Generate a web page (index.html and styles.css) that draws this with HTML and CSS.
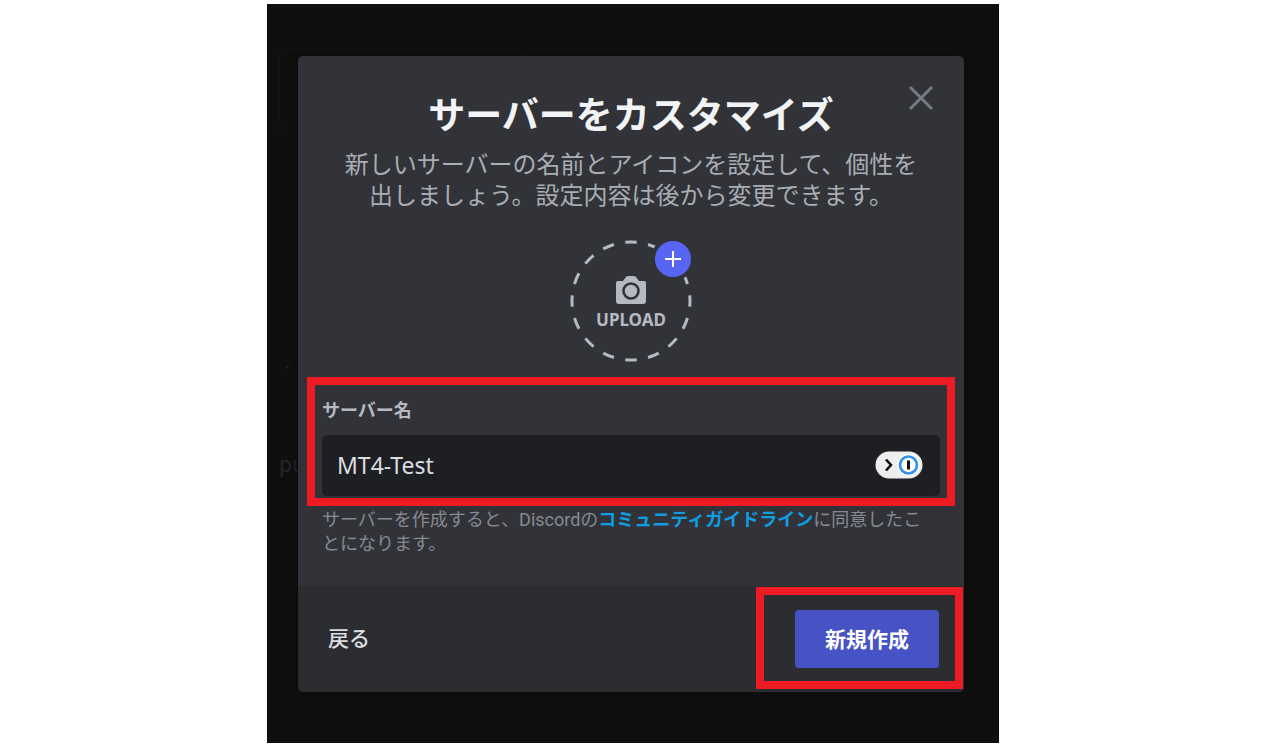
FILE: index.html
```
<!DOCTYPE html>
<html lang="ja">
<head>
    <meta charset="UTF-8">
    <meta name="viewport" content="width=device-width, initial-scale=1">
    <title>サーバーをカスタマイズ</title>
    <link rel="stylesheet" href="styles.css">
</head>
<body>

    <div class="backdrop">
        <!-- what is left of the app behind the modal -->
        <div class="ghost-panel"></div>
        <span class="ghost-dot"></span>
        <span class="ghost-text">pu</span>

        <form class="modal">
            <button type="button" class="close" aria-label="閉じる">
                <svg width="26" height="26" viewBox="0 0 26 26">
                    <path d="M2 2 L24 24 M24 2 L2 24" stroke="#777a80" stroke-width="3" fill="none"/>
                </svg>
            </button>

            <div class="modal-body">
                <h1>サーバーをカスタマイズ</h1>
                <p class="desc">新しいサーバーの名前とアイコンを設定して、個性を出しましょう。設定内容は後から変更できます。</p>

                <button type="button" class="upload">
                    <svg class="upload-ring" width="122" height="122" viewBox="0 0 122 122">
                        <circle cx="61" cy="61" r="59" fill="none" stroke="#b5bac1" stroke-width="3" pathLength="320" stroke-dasharray="10 10" stroke-dashoffset="5"/>
                        <circle cx="103" cy="19" r="22" fill="#313338"/>
                        <circle cx="103" cy="19" r="18" fill="#5865f2"/>
                        <path d="M103 11 V27 M95 19 H111" stroke="#fff" stroke-width="2"/>
                    </svg>
                    <svg class="camera" width="32" height="28" viewBox="0 0 32 28">
                        <path d="M3 5 H8 L11 1 Q12 0 13 0 H19 Q20 0 21 1 L24 5 H29 Q31 5 31 7 V25 Q31 28 28 28 H4 Q1 28 1 25 V7 Q1 5 3 5 Z" fill="#b5bac1"/>
                        <circle cx="16" cy="15" r="7.5" fill="none" stroke="#313338" stroke-width="2.6"/>
                    </svg>
                    <span>UPLOAD</span>
                </button>

                <div class="marked field">
                    <label for="server-name">サーバー名</label>
                    <div class="input-wrap">
                        <input type="text" id="server-name" value="MT4-Test">
                        <button type="button" class="pass" aria-label="1Password">
                            <svg width="48" height="28" viewBox="0 0 48 28">
                                <rect x="0.5" y="0.5" width="47" height="27" rx="13.5" fill="#eee"/>
                                <path d="M11 8.5 L16 14 L11 19.5" fill="none" stroke="#111" stroke-width="2.6"/>
                                <circle cx="33.5" cy="14" r="11" fill="#fff"/>
                                <circle cx="33.5" cy="14" r="8.5" fill="#fff" stroke="#3291e8" stroke-width="2.6"/>
                                <path d="M33.5 9.5 V18.5" stroke="#111" stroke-width="3"/>
                            </svg>
                        </button>
                    </div>
                </div>

                <p class="note">サーバーを作成すると、Discordの<a href="#">コミュニティガイドライン</a>に同意したことになります。</p>
            </div>

            <div class="modal-footer">
                <button type="button" class="back">戻る</button>
                <div class="marked submit-wrap">
                    <button type="submit" class="submit">新規作成</button>
                </div>
            </div>
        </form>
    </div>

</body>
</html>
```
FILE: styles.css
```
* {
    box-sizing: border-box;
}
body {
    margin: 0;
    background-color: #fff;
    font-family: "Noto Sans", "Noto Sans CJK JP", sans-serif;
}
button {
    border: none;
    padding: 0;
    background: none;
    font-family: inherit;
    cursor: pointer;
}
svg {
    display: block;
}

.backdrop {
    position: relative;
    max-width: 732px;
    margin: 4px auto 0;
    padding: 52px 35px 51px 31px;
    background-color: #0f0f10;
    overflow: hidden;
}
.ghost-panel {
    position: absolute;
    top: 44px;
    left: 12px;
    width: 242px;
    height: 84px;
    border: 1px solid #131314;
    border-radius: 6px;
}
.ghost-dot {
    position: absolute;
    top: 361px;
    left: 18px;
    width: 4px;
    height: 4px;
    border-radius: 50%;
    background-color: #1c1d1f;
}
.ghost-text {
    position: absolute;
    top: 444px;
    left: 12px;
    font-size: 21px;
    line-height: 32px;
    color: #252628;
}

.modal {
    position: relative;
    border-radius: 5px;
    background-color: #313338;
    box-shadow: 0 0 10px rgba(0, 0, 0, 0.4);
}
.close {
    position: absolute;
    top: 29px;
    right: 30px;
}
.modal-body {
    padding: 37px 9px 30px;
}
h1 {
    margin: 0;
    text-align: center;
    font-size: 37px;
    line-height: 44px;
    color: #f2f3f5;
}
.desc {
    margin: 11px 30px 0;
    text-align: center;
    font-size: 24px;
    line-height: 31px;
    color: #a9adb4;
}

.upload {
    position: relative;
    display: flex;
    flex-direction: column;
    align-items: center;
    width: 122px;
    height: 122px;
    margin: 30px auto 15px;
    padding-top: 36px;
    font-size: 17px;
    line-height: 24px;
    font-weight: bold;
    color: #b5bac1;
}
.upload-ring {
    position: absolute;
    top: 0;
    left: 0;
}
.upload span {
    margin-top: 4px;
}

/* red frames */
.marked {
    border: 8px solid #ed1c24;
}
.field {
    padding: 13px 7px 2px;
}
.field label {
    display: block;
    margin-bottom: 13px;
    font-size: 18px;
    line-height: 24px;
    font-weight: bold;
    color: #b5bac1;
}
.input-wrap {
    display: flex;
    align-items: center;
    height: 61px;
    padding: 0 17px 2px 15px;
    border-radius: 5px;
    background-color: #1e1f22;
}
.input-wrap input {
    flex: 1;
    min-width: 0;
    padding: 0;
    border: none;
    outline: none;
    background: none;
    font-family: inherit;
    font-size: 23px;
    line-height: 32px;
    color: #dbdee1;
}
.note {
    margin: 2px 30px 0 15px;
    font-family: Roboto, "Noto Sans CJK JP", sans-serif;
    font-size: 18px;
    line-height: 24px;
    color: #878a92;
}
.note a {
    font-weight: bold;
    color: #109ee2;
    text-decoration: none;
}

.modal-footer {
    display: flex;
    justify-content: space-between;
    align-items: center;
    padding: 1px 1px 3px 30px;
    border-radius: 0 0 5px 5px;
    background-color: #2b2d31;
}
.back {
    font-size: 21px;
    line-height: 32px;
    font-weight: 500;
    color: #dbdee1;
}
.submit-wrap {
    padding: 15px 16px 13px 31px;
}
.submit {
    display: block;
    padding: 13px 30px;
    border-radius: 4px;
    background-color: #4752c4;
    font-size: 21px;
    line-height: 32px;
    font-weight: bold;
    color: #fff;
}
```
